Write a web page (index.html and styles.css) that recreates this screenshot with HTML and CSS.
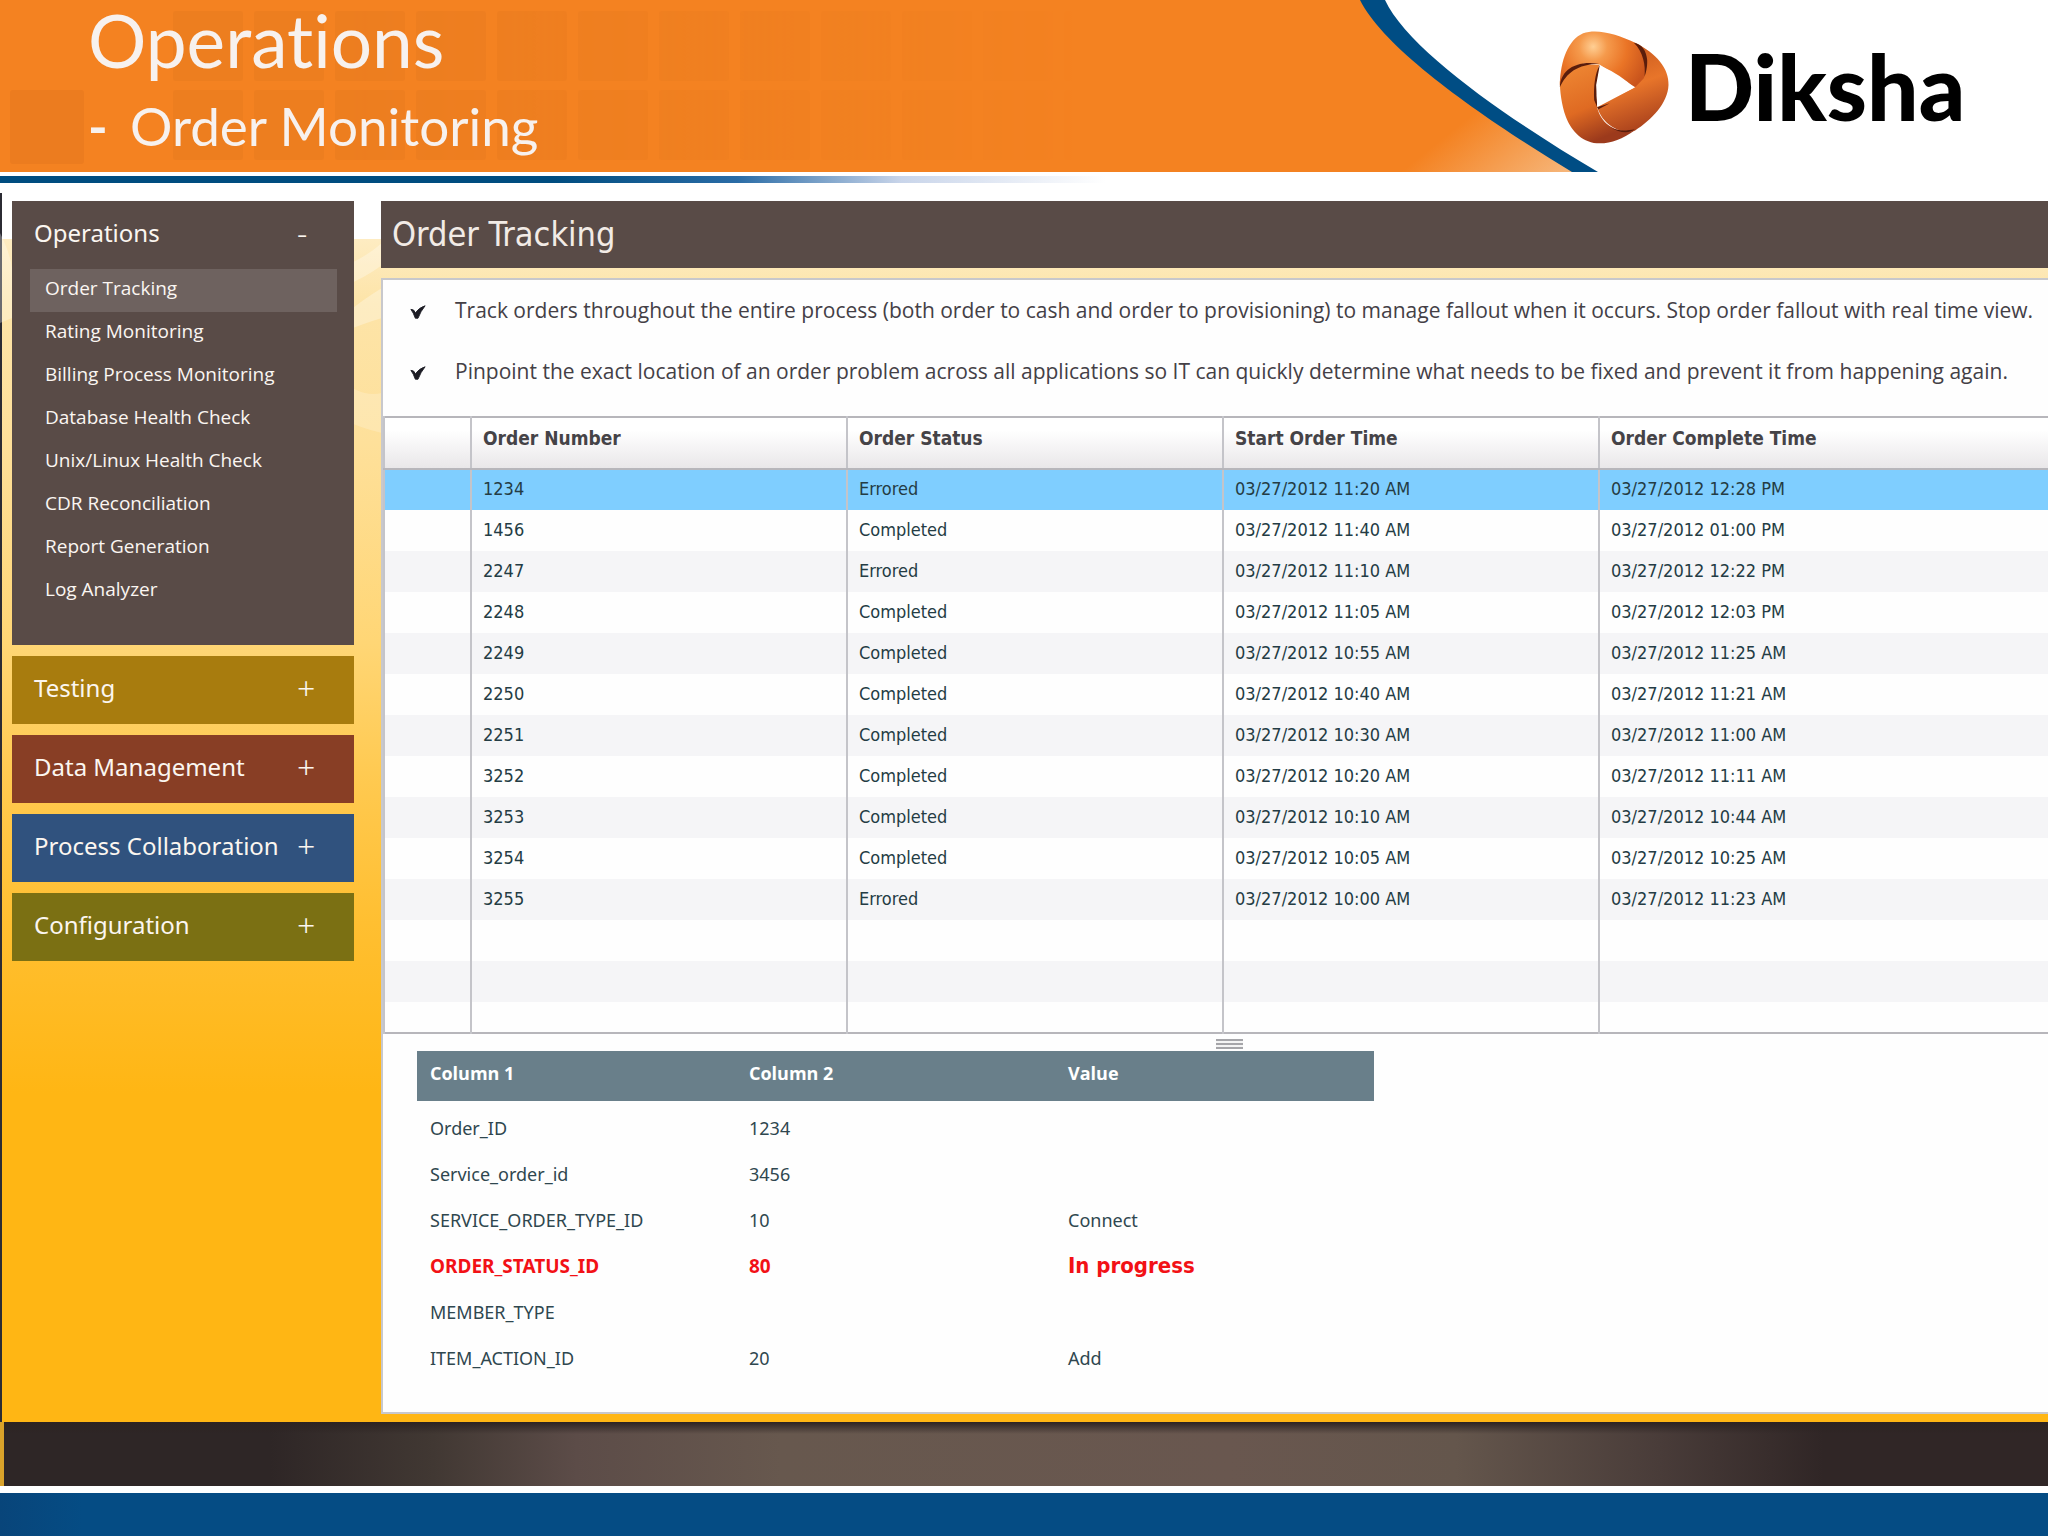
FILE: index.html
```html
<!DOCTYPE html>
<html lang="en">
<head>
<meta charset="utf-8">
<title>Operations - Order Monitoring</title>
<link rel="stylesheet" href="styles.css">
</head>
<body>
<header class="banner">
  <div class="banner-main">
    <svg class="tiles" aria-hidden="true">
      <defs>
        <pattern id="tile" x="173" y="11" width="81" height="79" patternUnits="userSpaceOnUse">
          <rect width="70" height="70" rx="3" fill="#ea7c1f"/>
        </pattern>
        <linearGradient id="fade"><stop offset="0.2" stop-color="#bbb"/><stop offset="1" stop-color="#000"/></linearGradient>
        <mask id="tile-mask"><rect x="173" width="900" height="172" fill="url(#fade)"/></mask>
      </defs>
      <rect x="173" y="11" width="900" height="158" fill="url(#tile)" mask="url(#tile-mask)"/>
      <rect x="10" y="90" width="74" height="74" rx="3" fill="#ec7c1f"/>
    </svg>
    <h1 class="banner-title">Operations</h1>
    <p class="banner-subtitle"><span class="dash">-</span>Order Monitoring</p>
  </div>
  <svg class="curve" viewBox="0 0 240 172" aria-hidden="true">
    <defs>
      <linearGradient id="glow" x1="0" y1="0" x2="1" y2="1">
        <stop offset="0.6" stop-color="#f48221"/><stop offset="1" stop-color="#f6b77c"/>
      </linearGradient>
    </defs>
    <path d="M0 0H27C50 50 152 120 240 172H0Z" fill="#004d84"/>
    <path d="M0 0H2C27 50 125 118 214 172H0Z" fill="url(#glow)"/>
  </svg>
  <div class="brand">
    <svg class="brand-mark" viewBox="55 60 335 345" aria-hidden="true">
      <defs>
        <radialGradient id="top" gradientUnits="userSpaceOnUse" cx="160" cy="110" r="170">
          <stop offset="0" stop-color="#ffcf94"/><stop offset="0.25" stop-color="#f59a4c"/><stop offset="0.6" stop-color="#ea7426"/><stop offset="1" stop-color="#c9541c"/>
        </radialGradient>
        <linearGradient id="left" x1="0" y1="0" x2="0.4" y2="1">
          <stop offset="0" stop-color="#f08a35"/><stop offset="0.6" stop-color="#df6a22"/><stop offset="1" stop-color="#9c3a1c"/>
        </linearGradient>
        <linearGradient id="right" x1="0.3" y1="0" x2="0.6" y2="1">
          <stop offset="0" stop-color="#c4551c"/><stop offset="0.5" stop-color="#e8752a"/><stop offset="1" stop-color="#a8401c"/>
        </linearGradient>
      </defs>
      <path fill="url(#left)" d="M60 215C66 185 90 158 178 164L166 230L172 292C180 330 215 372 283 362C250 385 215 400 180 400C130 400 95 365 78 320C65 285 60 240 60 215Z"/>
      <path fill="url(#right)" d="M286 98C350 130 388 175 386 225C384 280 335 330 285 362C230 375 185 335 172 292L286 232Z"/>
      <path fill="url(#top)" d="M60 225C62 150 85 90 130 70C175 55 235 75 286 98C316 125 324 170 312 205L286 232L180 164C120 148 76 176 60 225Z"/>
      <path fill="#5a1d0c" d="M282 98C306 102 320 122 322 150C323 172 318 190 314 200C318 166 310 125 282 98ZM60 232C62 185 100 150 178 161C112 163 80 188 60 232ZM212 352C235 366 262 362 285 358C270 371 240 371 212 352ZM180 164L169 225L172 292L163 270C161 230 165 190 180 164ZM172 292L210 280L176 298Z"/>
      <path fill="#fff" d="M182 167Q245 195 282 233L172 288Q167 230 182 167Z"/>
    </svg>
    <span class="brand-name">Diksha</span>
  </div>
</header>
<div class="rule"></div>

<div class="workspace">
  <svg class="swirls" viewBox="0 0 382 400" aria-hidden="true">
    <path d="M0 40Q10 60 12 75L12 125L0 130Z" fill="#fff" opacity=".3"/>
    <path d="M340 75Q365 65 382 50V72Q365 85 340 95Z" fill="#fff" opacity=".3"/>
    <path d="M340 125Q365 105 382 95V125Q365 130 340 140Z" fill="#fff" opacity=".3"/>
    <path d="M340 185Q360 205 382 200V240Q360 235 340 225Z" fill="#fff" opacity=".2"/>
  </svg>
  <nav class="sidebar" aria-label="Main">
    <section class="group group-operations">
      <button class="group-head" type="button" aria-expanded="true"><span>Operations</span><span class="sign">-</span></button>
      <ul class="menu">
        <li><a class="current" href="#tracking">Order Tracking</a></li>
        <li><a href="#rating">Rating Monitoring</a></li>
        <li><a href="#billing">Billing Process Monitoring</a></li>
        <li><a href="#database">Database Health Check</a></li>
        <li><a href="#unix">Unix/Linux Health Check</a></li>
        <li><a href="#cdr">CDR Reconciliation</a></li>
        <li><a href="#report">Report Generation</a></li>
        <li><a href="#log">Log Analyzer</a></li>
      </ul>
    </section>
    <button class="group-head testing" type="button" aria-expanded="false"><span>Testing</span><span class="sign">+</span></button>
    <button class="group-head data" type="button" aria-expanded="false"><span>Data Management</span><span class="sign">+</span></button>
    <button class="group-head process" type="button" aria-expanded="false"><span>Process Collaboration</span><span class="sign">+</span></button>
    <button class="group-head config" type="button" aria-expanded="false"><span>Configuration</span><span class="sign">+</span></button>
  </nav>

  <main class="content" id="tracking">
    <h2 class="content-title">Order Tracking</h2>
    <div class="panel">
      <ul class="notes">
        <li><svg class="tick" viewBox="0 0 18 18" aria-hidden="true"><path d="M1 6Q5 6 6 10Q10 4 17 2Q12 8 9 16H6Q4 10 1 6Z" fill="#1c1c24" stroke="#1c1c24"/></svg>Track orders throughout the entire process (both order to cash and order to provisioning) to manage fallout when it occurs. Stop order fallout with real time view.</li>
        <li><svg class="tick" viewBox="0 0 18 18" aria-hidden="true"><path d="M1 6Q5 6 6 10Q10 4 17 2Q12 8 9 16H6Q4 10 1 6Z" fill="#1c1c24" stroke="#1c1c24"/></svg>Pinpoint the exact location of an order problem across all applications so IT can quickly determine what needs to be fixed and prevent it from happening again.</li>
      </ul>
      <table class="orders">
        <colgroup><col class="col-mark"><col class="col-data"><col class="col-data"><col class="col-data"><col></colgroup>
        <thead>
          <tr><th></th><th>Order Number</th><th>Order Status</th><th>Start Order Time</th><th>Order Complete Time</th></tr>
        </thead>
        <tbody>
          <tr class="selected"><td></td><td>1234</td><td>Errored</td><td>03/27/2012 11:20 AM</td><td>03/27/2012 12:28 PM</td></tr>
          <tr><td></td><td>1456</td><td>Completed</td><td>03/27/2012 11:40 AM</td><td>03/27/2012 01:00 PM</td></tr>
          <tr><td></td><td>2247</td><td>Errored</td><td>03/27/2012 11:10 AM</td><td>03/27/2012 12:22 PM</td></tr>
          <tr><td></td><td>2248</td><td>Completed</td><td>03/27/2012 11:05 AM</td><td>03/27/2012 12:03 PM</td></tr>
          <tr><td></td><td>2249</td><td>Completed</td><td>03/27/2012 10:55 AM</td><td>03/27/2012 11:25 AM</td></tr>
          <tr><td></td><td>2250</td><td>Completed</td><td>03/27/2012 10:40 AM</td><td>03/27/2012 11:21 AM</td></tr>
          <tr><td></td><td>2251</td><td>Completed</td><td>03/27/2012 10:30 AM</td><td>03/27/2012 11:00 AM</td></tr>
          <tr><td></td><td>3252</td><td>Completed</td><td>03/27/2012 10:20 AM</td><td>03/27/2012 11:11 AM</td></tr>
          <tr><td></td><td>3253</td><td>Completed</td><td>03/27/2012 10:10 AM</td><td>03/27/2012 10:44 AM</td></tr>
          <tr><td></td><td>3254</td><td>Completed</td><td>03/27/2012 10:05 AM</td><td>03/27/2012 10:25 AM</td></tr>
          <tr><td></td><td>3255</td><td>Errored</td><td>03/27/2012 10:00 AM</td><td>03/27/2012 11:23 AM</td></tr>
          <tr><td></td><td></td><td></td><td></td><td></td></tr>
          <tr><td></td><td></td><td></td><td></td><td></td></tr>
          <tr class="cut"><td></td><td></td><td></td><td></td><td></td></tr>
        </tbody>
      </table>
      <div class="splitter"><span class="grip"></span></div>
      <table class="details">
        <thead><tr><th>Column 1</th><th>Column 2</th><th>Value</th></tr></thead>
        <tbody>
          <tr><td>Order_ID</td><td>1234</td><td></td></tr>
          <tr><td>Service_order_id</td><td>3456</td><td></td></tr>
          <tr><td>SERVICE_ORDER_TYPE_ID</td><td>10</td><td>Connect</td></tr>
          <tr class="alert"><td>ORDER_STATUS_ID</td><td>80</td><td class="state">In progress</td></tr>
          <tr><td>MEMBER_TYPE</td><td></td><td></td></tr>
          <tr><td>ITEM_ACTION_ID</td><td>20</td><td>Add</td></tr>
        </tbody>
      </table>
    </div>
  </main>
</div>
<footer class="footer">
  <div class="footer-dark"></div>
  <div class="footer-blue"></div>
</footer>
</body>
</html>
```
FILE: styles.css
```css
* { box-sizing: border-box; }

body {
  margin: 0;
  min-height: 100vh;
  display: flex;
  flex-direction: column;
  background: #fff;
  font-family: "Noto Sans", sans-serif;
  overflow-x: hidden;
}

h1, h2, p, ul { margin: 0; padding: 0; font-weight: 400; }
ul { list-style: none; }
table { border-collapse: collapse; table-layout: fixed; }
th, td { padding: 0; text-align: left; }

/* Banner */
.banner { display: flex; height: 172px; overflow: hidden; }
.banner-main {
  position: relative;
  flex: 1;
  padding-left: 88px;
  background: #f48221;
  color: #f7f1ee;
  font-family: Lato, sans-serif;
  font-variant-ligatures: none;
}
.tiles { position: absolute; inset: 0; width: 100%; height: 100%; }
.banner-title { position: relative; font-size: 73px; line-height: 80px; }
.banner-subtitle { position: relative; display: flex; font-size: 53px; line-height: 92px; }
.dash { width: 42px; font-weight: 700; }
.curve { flex: none; width: 240px; height: 172px; }
.brand {
  position: relative;
  flex: none;
  display: flex;
  align-items: flex-start;
  width: 490px;
  margin-left: -40px;
  padding-top: 30px;
}
.brand-mark { width: 112px; height: 115px; }
.brand-name {
  margin-left: 15px;
  color: #000;
  font: 900 91px/112px Lato, sans-serif;
}
.rule {
  height: 7px;
  margin: 4px 0 10px;
  background: linear-gradient(90deg, #004d80 27%, #2a6ca6 36%, #c9d5ea 44%, #fff 54%);
}

/* Workspace */
.workspace {
  position: relative;
  flex: 1;
  display: flex;
  gap: 27px;
  padding: 8px 0 8px 10px;
  border-left: 2px solid #2b2b33;
  background: linear-gradient(180deg, #fff 0, #fff 46px, #feecc2 46px, #fde4a8 110px, #fee09a 250px, #ffd675 450px, #ffc94f 590px, #ffbf31 730px, #ffb614 900px);
}
.swirls { position: absolute; left: -2px; top: 0; width: 382px; height: 400px; }

.sidebar {
  position: relative;
  flex: none;
  display: flex;
  flex-direction: column;
  gap: 11px;
  width: 342px;
}
.group-operations { height: 444px; background: #594b47; }
.group-head {
  display: flex;
  justify-content: space-between;
  width: 100%;
  height: 68px;
  padding: 0 0 5px 22px;
  border: 0;
  color: #fbf6f0;
  font: 400 24px/63px "Noto Sans", sans-serif;
  text-align: left;
}
.group-operations .group-head { background: none; }
.sign { width: 57px; font-size: 32px; font-weight: 300; }
.testing { background: #a87c0e; }
.data { background: #883e25; }
.process { background: #30527e; }
.config { background: #7b7013; }

.menu { padding: 0 17px 0 18px; }
.menu a {
  display: block;
  height: 43px;
  padding-left: 15px;
  color: #fbf6f2;
  font: 400 19px/38px "Open Sans", sans-serif;
  text-decoration: none;
}
.menu .current { background: #6e625f; }

.content { position: relative; flex: 1; min-width: 0; display: flex; flex-direction: column; }
.content-title {
  padding-left: 11px;
  background: #594b47;
  color: #f2ebe6;
  font: 400 34px/67px "DejaVu Sans Condensed", "DejaVu Sans", sans-serif;
}
.panel {
  flex: 1;
  margin-top: 10px;
  border: 2px solid #c8c8cc;
  border-right: 0;
  background: #fefefe;
}

.notes { height: 136px; color: #444046; font: 400 21px/61px "Open Sans", sans-serif; }
.notes li { display: flex; align-items: center; padding-left: 27px; white-space: nowrap; }
.tick { width: 16px; height: 16px; margin: 3px 29px 0 0; }

/* Orders */
.orders {
  width: 100%;
  border: 2px solid #b7b6bb;
  border-left-width: 1px;
  border-right: 0;
  color: #243c44;
  font: 400 18px/24px "DejaVu Sans Condensed", "DejaVu Sans", sans-serif;
}
.col-mark { width: 87px; }
.col-data { width: 376px; }
.orders th, .orders td { height: 41px; padding: 0 0 2px 11px; border-left: 2px solid #c4c4c9; }
.orders th {
  height: 52px;
  padding-bottom: 11px;
  border-bottom: 2px solid #b7b6bb;
  background: linear-gradient(180deg, #fff 25%, #e9e7e9);
  color: #454347;
  font-size: 19px;
}
.orders tbody tr:nth-child(odd) { background: #f5f5f7; }
.orders tbody .selected:nth-child(odd) { background: #7fceff; }
.orders .cut td { height: 31px; }

.splitter { display: flex; justify-content: center; height: 17px; padding: 5px 0 0 28px; }
.grip {
  width: 27px;
  height: 10px;
  background: repeating-linear-gradient(180deg, #a5a5a9 0, #a5a5a9 2px, #f4f4f4 2px, #f4f4f4 4px);
}

/* Details */
.details {
  width: 957px;
  margin: 0 0 31px 34px;
  color: #2f474f;
  font: 400 18px/24px "Noto Sans", sans-serif;
}
.details th, .details td { width: 319px; height: 46px; padding-left: 13px; }
.details th {
  height: 50px;
  padding-bottom: 6px;
  background: #697f8a;
  color: #fff;
  font-family: "Open Sans", sans-serif;
}
.details tbody::before { content: ""; display: block; height: 4px; }
.details .alert td { color: #f21116; font-size: 19px; font-weight: 700; }
.details .alert .state { font-family: "DejaVu Sans Condensed", "DejaVu Sans", sans-serif; font-size: 22px; }

/* Footer */
.footer-dark {
  height: 64px;
  border-left: 4px solid #d9a22a;
  background:
    linear-gradient(180deg, #2c2322 0, #2c232200 12px),
    linear-gradient(90deg, #2e2626 13%, #413833 21%, #5c4c48 28%, #67584e 38%, #69574f 60%, #64564c 71%, #493c39 81%, #302626 89%);
}
.footer-blue {
  height: 44px;
  margin-top: 7px;
  background: linear-gradient(90deg, #08457a, #054c84 4%);
}
```
